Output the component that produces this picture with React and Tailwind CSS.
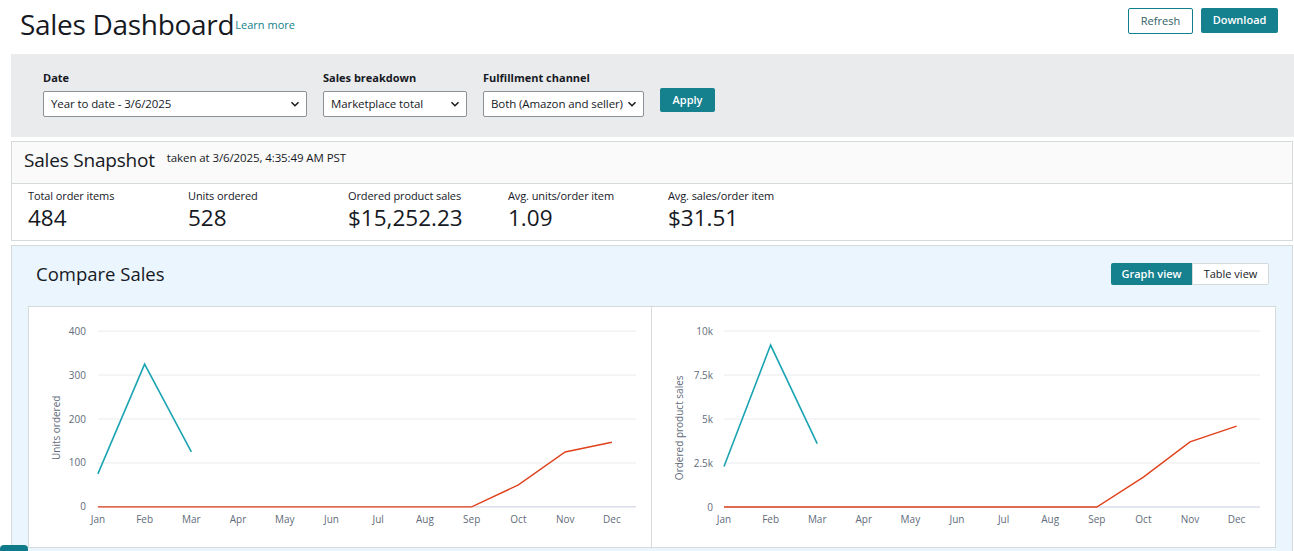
import React from "react";

const months = ["Jan", "Feb", "Mar", "Apr", "May", "Jun", "Jul", "Aug", "Sep", "Oct", "Nov", "Dec"];

const charts = [
  {
    title: "Units ordered",
    max: 400,
    ticks: [
      { v: 0, label: "0" },
      { v: 100, label: "100" },
      { v: 200, label: "200" },
      { v: 300, label: "300" },
      { v: 400, label: "400" },
    ],
    current: [75, 325, 125],
    previous: [0, 0, 0, 0, 0, 0, 0, 0, 0, 50, 125, 147],
    labelX: 57,
    x0: 69,
    step: 46.8,
  },
  {
    title: "Ordered product sales",
    max: 10000,
    ticks: [
      { v: 0, label: "0" },
      { v: 2500, label: "2.5k" },
      { v: 5000, label: "5k" },
      { v: 7500, label: "7.5k" },
      { v: 10000, label: "10k" },
    ],
    current: [2300, 9200, 3600],
    previous: [0, 0, 0, 0, 0, 0, 0, 0, 0, 1700, 3700, 4600],
    labelX: 61,
    x0: 72,
    step: 46.6,
  },
];

const Chevron = () => (
  <svg width="10" height="10" viewBox="0 0 10 10" className="shrink-0">
    <path d="M1.5 3.2 L5 6.7 L8.5 3.2" fill="none" stroke="#16191f" strokeWidth="1.5" />
  </svg>
);

const Select = ({ value, width }) => (
  <div
    className={`flex items-center justify-between h-[26px] bg-white border border-[#8d9096] rounded-[2px] pl-[7px] pr-[6px] text-[11.5px] text-[#16191f] whitespace-nowrap ${width}`}
  >
    <span className="tracking-[-0.1px]">{value}</span>
    <Chevron />
  </div>
);

const LineChart = ({ chart }) => {
  const { x0, step } = chart;
  const yTop = 24;
  const yBase = 200;
  const xAt = (i) => x0 + i * step;
  const yAt = (v) => yBase - (v / chart.max) * (yBase - yTop);
  const pts = (arr) => arr.map((v, i) => `${xAt(i)},${yAt(v)}`).join(" ");

  return (
    <svg width="100%" height="240" viewBox="0 0 623 240">
      {chart.ticks.map((t) => (
        <g key={t.v}>
          <line
            x1={x0}
            x2={608}
            y1={yAt(t.v)}
            y2={yAt(t.v)}
            stroke={t.v === 0 ? "#c6cee0" : "#e9ebed"}
            strokeWidth="1"
          />
          <text
            x={chart.labelX}
            y={yAt(t.v) + 3.5}
            textAnchor="end"
            fontSize="10"
            fill="#5f6b7a"
          >
            {t.label}
          </text>
        </g>
      ))}
      {months.map((m, i) => (
        <text key={m} x={xAt(i)} y={216} textAnchor="middle" fontSize="10" fill="#5f6b7a">
          {m}
        </text>
      ))}
      <text
        x={0}
        y={0}
        transform={`translate(31 ${yAt(chart.max * 0.45)}) rotate(-90)`}
        textAnchor="middle"
        fontSize="10"
        fill="#5f6b7a"
      >
        {chart.title}
      </text>
      <polyline points={pts(chart.previous)} fill="none" stroke="#e0411b" strokeWidth="1.4" />
      <polyline points={pts(chart.current)} fill="none" stroke="#1aa4b2" strokeWidth="1.6" />
    </svg>
  );
};

const metrics = [
  { label: "Total order items", value: "484" },
  { label: "Units ordered", value: "528" },
  { label: "Ordered product sales", value: "$15,252.23" },
  { label: "Avg. units/order item", value: "1.09" },
  { label: "Avg. sales/order item", value: "$31.51" },
];

export default function App() {
  return (
    <div
      className="w-[1294px] h-[551px] overflow-hidden bg-white text-[#16191f] relative"
      style={{ fontFamily: '"Open Sans", "Noto Sans", Arial, sans-serif' }}
    >
      <div className="flex items-start justify-between h-[54px] pl-[20px] pr-[16px]">
        <div className="flex items-end pt-[5px]">
          <h1 className="text-[28px] leading-[38px] text-[#16191f] tracking-[-0.3px]">Sales Dashboard</h1>
          <a className="text-[11px] text-[#0f7f8d] mb-[10px] ml-[1px]">Learn more</a>
        </div>
        <div className="flex gap-[8px] pt-[8px]">
          <button className="h-[26px] w-[65px] border border-[#0f7f8d] rounded-[2px] text-[11px] text-[#325f66] bg-white">
            Refresh
          </button>
          <button className="h-[25px] w-[77px] rounded-[2px] text-[11px] font-semibold text-white bg-[#15808e]">
            Download
          </button>
        </div>
      </div>

      <div className="pl-[11px] flex flex-col gap-[4px]">
        <div className="bg-[#eaebed] h-[83px] pl-[32px] pt-[16px] flex items-start gap-[16px]">
          <div className="flex flex-col gap-[5px]">
            <span className="text-[11px] font-bold leading-[16px]">Date</span>
            <Select value="Year to date - 3/6/2025" width="w-[264px]" />
          </div>
          <div className="flex flex-col gap-[5px]">
            <span className="text-[11px] font-bold leading-[16px]">Sales breakdown</span>
            <Select value="Marketplace total" width="w-[144px]" />
          </div>
          <div className="flex flex-col gap-[5px]">
            <span className="text-[11px] font-bold leading-[16px]">Fulfillment channel</span>
            <Select value="Both (Amazon and seller)" width="w-[161px]" />
          </div>
          <button className="mt-[18px] h-[24px] w-[55px] rounded-[2px] bg-[#15808e] text-white text-[11px] font-semibold">
            Apply
          </button>
        </div>

        <div className="mr-[1px] border border-[#d5dbdb]">
          <div className="h-[42px] bg-[#fafafa] border-b border-[#d5dbdb] flex items-start pl-[12px] pt-[5px] gap-[12px]">
            <span className="text-[19px] leading-[26px] tracking-[-0.2px]">Sales Snapshot</span>
            <span className="text-[11.5px] leading-[20px] mt-[1px] tracking-[-0.1px]">taken at 3/6/2025, 4:35:49 AM PST</span>
          </div>
          <div className="h-[56px] flex pl-[16px] pt-[4px]">
            {metrics.map((m) => (
              <div key={m.label} className="w-[160px] flex flex-col">
                <span className="text-[11px] leading-[16px] text-[#16191f] tracking-[-0.1px]">{m.label}</span>
                <span className="text-[22.5px] leading-[28px] text-[#16191f]">{m.value}</span>
              </div>
            ))}
          </div>
        </div>

        <div className="mr-[1px] border border-[#d5dbdb] bg-[#eaf5fd] h-[320px] pl-[16px] pr-[16px]">
          <div className="flex items-center justify-between h-[60px] pl-[8px] pr-[7px]">
            <span className="text-[18.5px] leading-[24px] mt-[-4px]">Compare Sales</span>
            <div className="flex mt-[-4px]">
              <button className="h-[22px] w-[81px] bg-[#15808e] text-white text-[11px] font-semibold rounded-l-[2px]">
                Graph view
              </button>
              <button className="h-[22px] w-[77px] bg-white border border-[#d5dbdb] text-[11px] text-[#16191f] rounded-r-[2px]">
                Table view
              </button>
            </div>
          </div>
          <div className="grid grid-cols-2 bg-white border border-[#d5dbdb] h-[242px]">
            <div className="border-r border-[#d5dbdb]">
              <LineChart chart={charts[0]} />
            </div>
            <div>
              <LineChart chart={charts[1]} />
            </div>
          </div>
        </div>
      </div>

      <div className="absolute left-0 bottom-[-20px] w-[28px] h-[26px] rounded-[4px] bg-[#0f7a89]" />
    </div>
  );
}
